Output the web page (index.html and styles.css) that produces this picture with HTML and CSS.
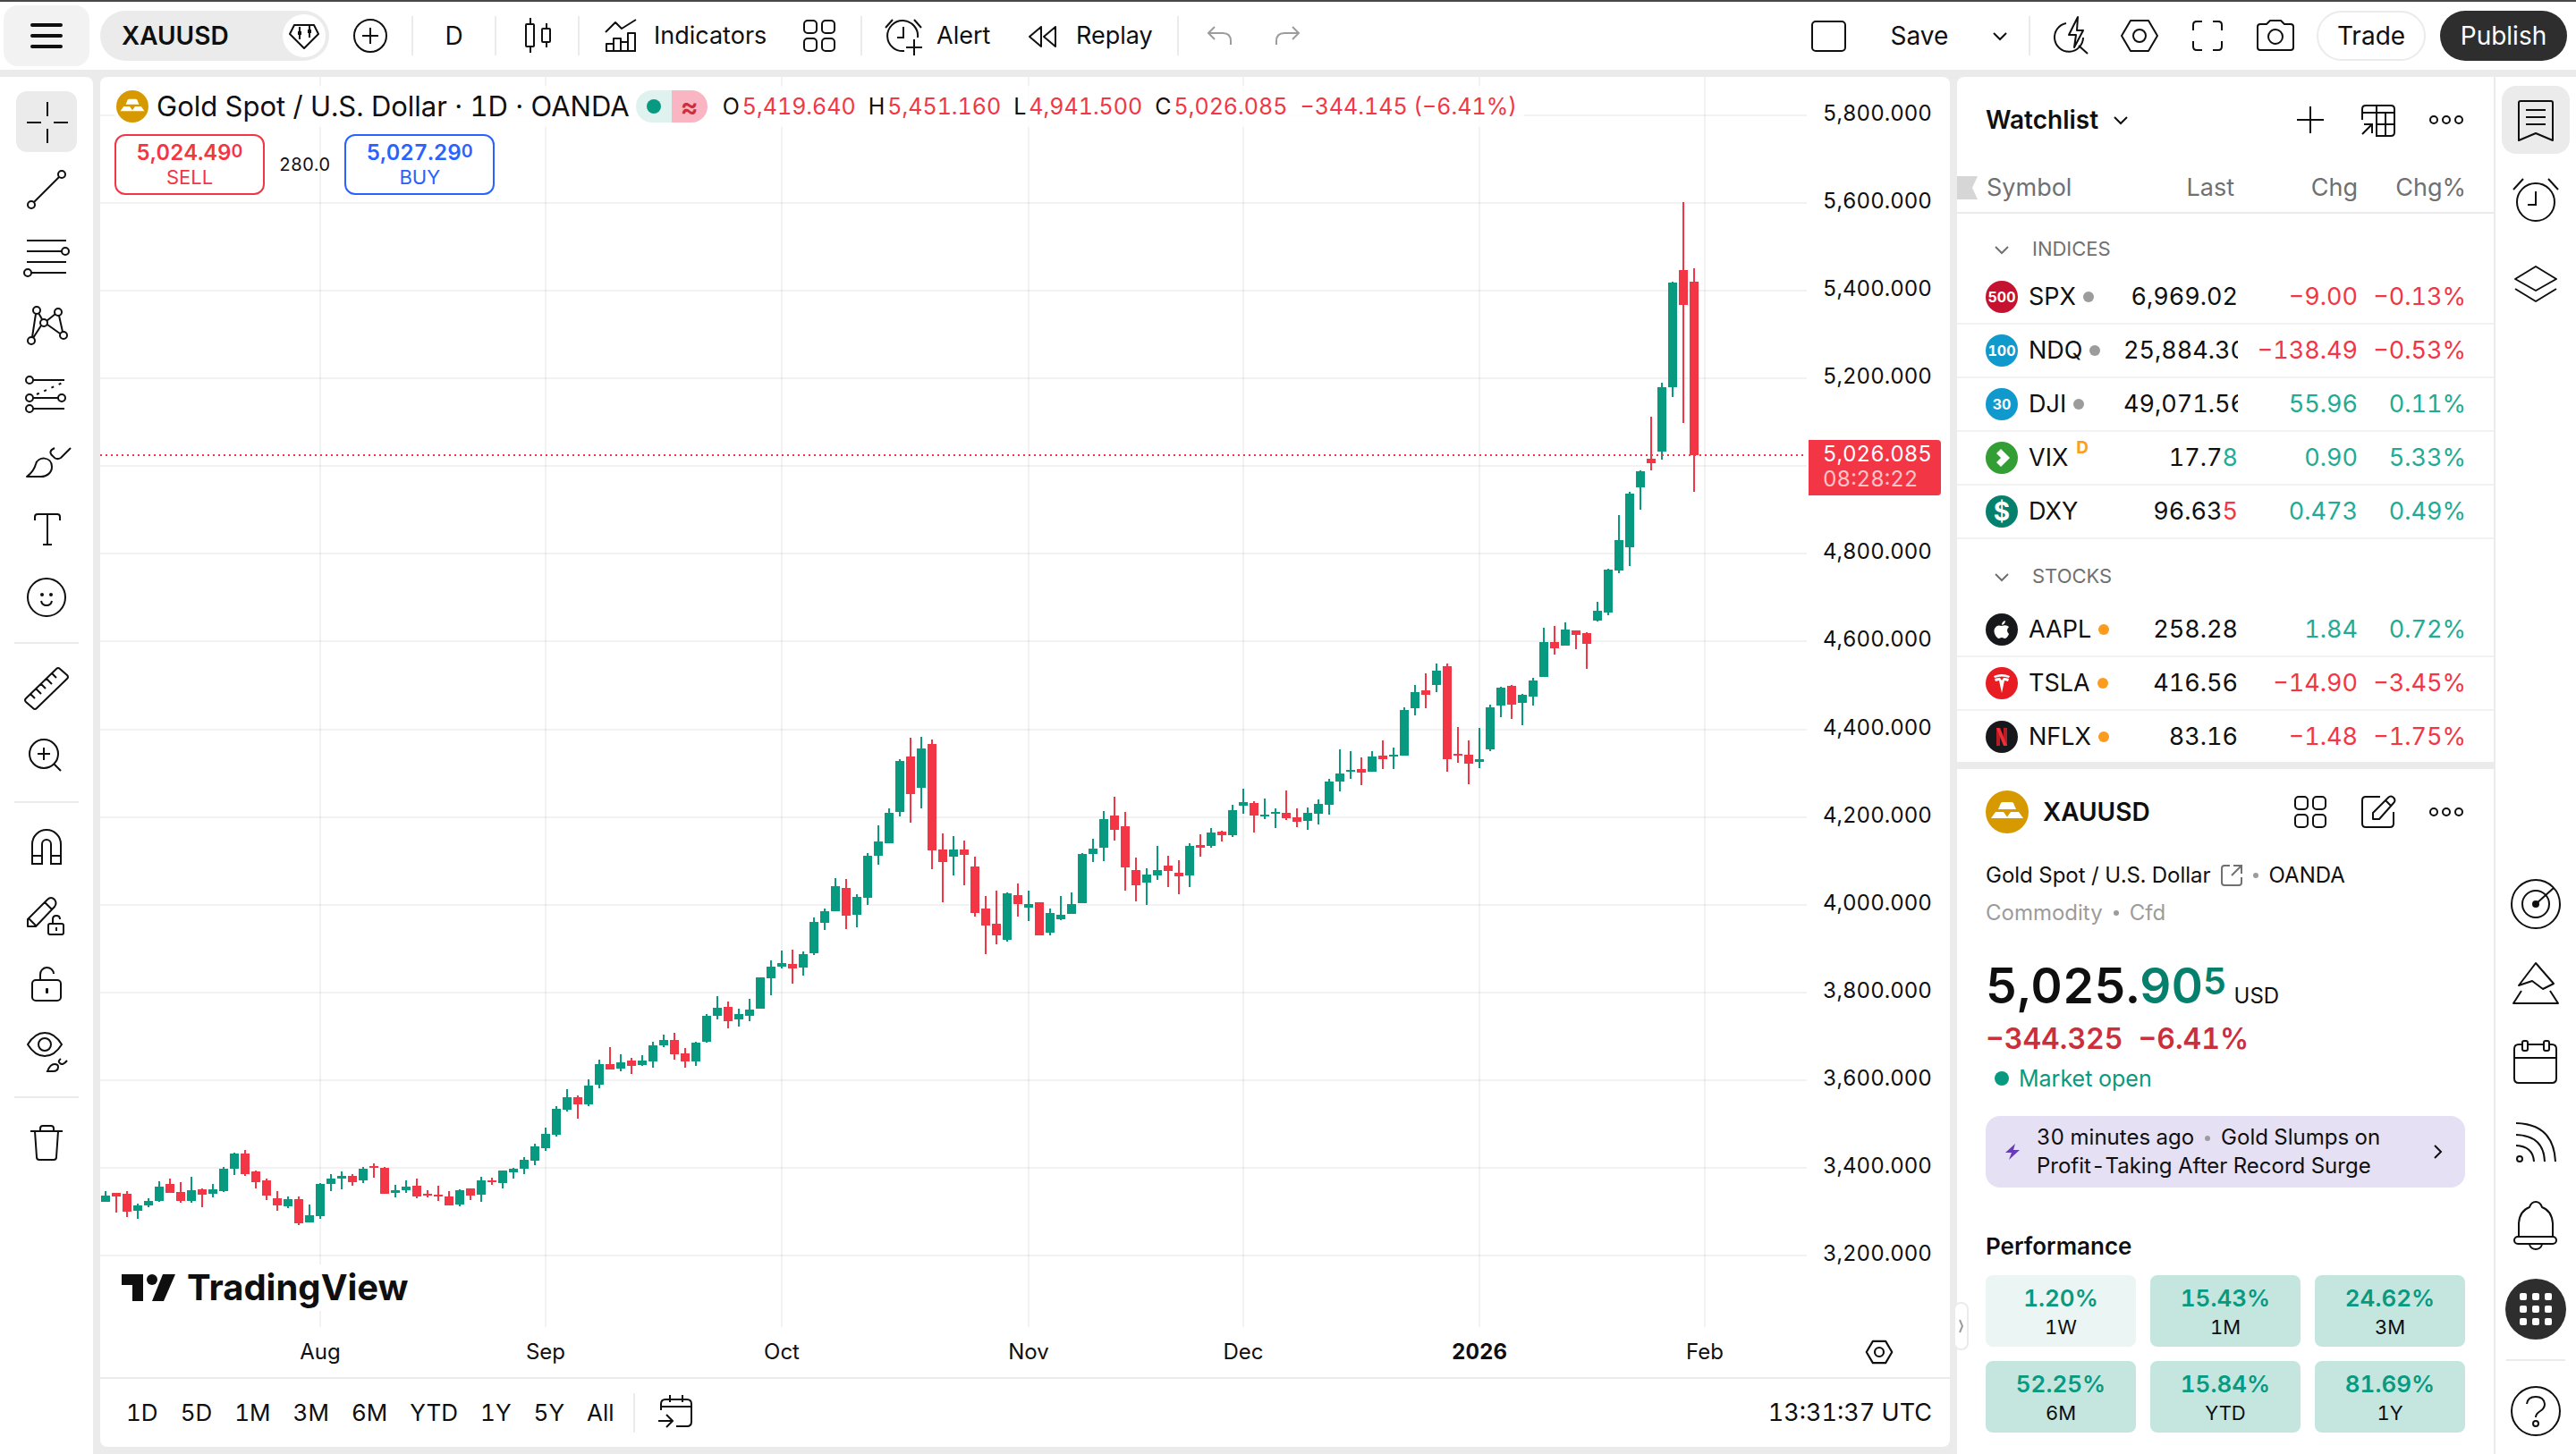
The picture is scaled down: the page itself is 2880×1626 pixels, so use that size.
FILE: index.html
```html
<!DOCTYPE html>
<html lang="en">
<head>
<meta charset="utf-8">
<meta name="viewport" content="width=device-width, initial-scale=1">
<title>XAUUSD 5,026.085 — TradingView</title>
<link rel="stylesheet" href="styles.css">
</head>
<body>
<svg class="defs" aria-hidden="true">
  <symbol id="i-gold" viewBox="0 0 48 48"><circle cx="24" cy="24" r="24" fill="#d69a00" stroke="none"/><path fill="#fff" stroke="none" d="M19 13h10q1 0 2 1l3 7H14l3-7q1-1 2-1zM11 24h9l5 7H6zM28 24h9l5 7H23z"/></symbol>
  <symbol id="i-grid" viewBox="0 0 56 56"><rect x="11" y="11" width="14" height="14" rx="4"/><rect x="31" y="11" width="14" height="14" rx="4"/><rect x="11" y="31" width="14" height="14" rx="4"/><rect x="31" y="31" width="14" height="14" rx="4"/></symbol>
  <symbol id="i-dots" viewBox="0 0 56 56"><circle cx="14" cy="28" r="4"/><circle cx="28" cy="28" r="4"/><circle cx="42" cy="28" r="4"/></symbol>
  <symbol id="i-chev" viewBox="0 0 20 20"><path d="M3 7l7 7 7-7"/></symbol>
  <symbol id="i-hex" viewBox="0 0 56 56"><path d="M18 11h20l10 17-10 17H18L8 28z" stroke-linejoin="round"/><circle cx="28" cy="28" r="7"/></symbol>
</svg>

<div class="app">
  <header class="topbar">
    <button class="menu" aria-label="Open menu"><svg class="ic" viewBox="0 0 56 56"><path d="M12 16h32M12 28h32M12 40h32" stroke-width="4" stroke-linecap="round"/></svg></button>
    <div class="symbol-pill">
      <button class="symbol-name">XAUUSD</button>
      <button class="gem" aria-label="Asset details"><svg class="ic" viewBox="0 0 56 56"><path d="M17 16h22l5 10-16 16-16-16z" stroke-linejoin="round"/><path d="M23 18v14M34 17v13M21 24h4M21 26h4M32 22h4M32 24h4"/></svg></button>
    </div>
    <button class="tool compare" aria-label="Compare"><svg class="ic" viewBox="0 0 56 56"><circle cx="28" cy="28" r="18"/><path d="M28 19v18M19 28h18"/></svg></button>
    <span class="sep"></span>
    <button class="interval">D</button>
    <span class="sep"></span>
    <button class="interval" aria-label="Candles"><svg class="ic" viewBox="0 0 56 56"><rect x="15" y="15" width="9" height="25" rx="1"/><path d="M20 8v7M20 40v7"/><rect x="33" y="20" width="9" height="15" rx="1"/><path d="M38 14v6M38 35v6"/></svg></button>
    <span class="sep"></span>
    <button class="tool labelled indicators"><svg class="ic" viewBox="0 0 56 56"><path d="M11 24l11-11 7 7L45 10M12 45V37h8v8M20 45V31h8v14M28 45V35h8v10M36 45V25h8v20M11 45h34" stroke-linejoin="round"/></svg>Indicators</button>
    <button class="tool" aria-label="Indicator templates"><svg class="ic"><use href="#i-grid"/></svg></button>
    <span class="sep wide"></span>
    <button class="tool labelled alert"><svg class="ic" viewBox="0 0 56 56"><path d="M8 19l8-9M48 19l-8-9M44 30A17 17 0 1 0 29 45M28 18v12h-7M40 32v18M31 41h18"/></svg>Alert</button>
    <button class="tool labelled replay"><svg class="ic" viewBox="0 0 56 56"><path d="M26 18v22L13 29zM42 18v22L29 29z" stroke-linejoin="round"/></svg>Replay</button>
    <span class="sep wide"></span>
    <button class="tool" aria-label="Undo" disabled><svg class="ic" viewBox="0 0 56 56"><path d="M22 18l-7 7 7 7M15 25h16q9 0 9 9v4"/></svg></button>
    <button class="tool redo" aria-label="Redo" disabled><svg class="ic" viewBox="0 0 56 56"><path d="M34 18l7 7-7 7M41 25H25q-9 0-9 9v4"/></svg></button>

    <div class="topbar-right">
      <button class="tool" aria-label="Layout"><svg class="ic" viewBox="0 0 56 56"><rect x="10" y="12" width="37" height="33" rx="4"/></svg></button>
      <button class="save">Save</button>
      <button class="caret" aria-label="Manage layouts"><svg class="ic-s"><use href="#i-chev"/></svg></button>
      <span class="sep"></span>
      <button class="tool" aria-label="Quick search"><svg class="ic" viewBox="0 0 56 56"><path d="M22 14A16 16 0 1 0 41 30M36 39l10 9M35 7L25 27h8l-2 14 10-19h-7z" stroke-linejoin="round"/></svg></button>
      <button class="tool" aria-label="Settings"><svg class="ic"><use href="#i-hex"/></svg></button>
      <button class="tool" aria-label="Fullscreen"><svg class="ic" viewBox="0 0 56 56"><path d="M12 22v-6q0-4 4-4h6M34 12h6q4 0 4 4v6M44 34v6q0 4-4 4h-6M22 44h-6q-4 0-4-4v-6"/></svg></button>
      <button class="tool" aria-label="Take a snapshot"><svg class="ic" viewBox="0 0 56 56"><path d="M11 15h7l4-4h12l4 4h7q3 0 3 3v23q0 3-3 3H11q-3 0-3-3V18q0-3 3-3z" stroke-linejoin="round"/><circle cx="28" cy="29" r="8"/></svg></button>
      <button class="trade">Trade</button>
      <button class="publish">Publish</button>
    </div>
  </header>

  <div class="workspace">
    <nav class="drawbar" aria-label="Drawing tools">
      <button class="draw on" aria-label="Cross"><svg class="ic" viewBox="0 0 56 56"><path d="M29 6v16M29 36v16M6 29h16M36 29h16"/></svg></button>
      <button class="draw" aria-label="Trend line"><svg class="ic" viewBox="0 0 56 56"><circle cx="11" cy="45" r="4"/><circle cx="45" cy="11" r="4"/><path d="M14 42l28-28"/></svg></button>
      <button class="draw" aria-label="Fib retracement"><svg class="ic" viewBox="0 0 56 56"><path d="M6 9h44M6 21h39M6 33h44M11 45h39"/><circle cx="49" cy="21" r="4"/><circle cx="7" cy="45" r="4"/></svg></button>
      <button class="draw" aria-label="Patterns"><svg class="ic" viewBox="0 0 56 56"><circle cx="17" cy="11" r="4"/><circle cx="41" cy="13" r="4"/><circle cx="25" cy="25" r="4"/><circle cx="47" cy="39" r="4"/><circle cx="11" cy="45" r="4"/><path d="M16 15l-4 26M19 14l4 7M28 23l10-8M42 17l4 18M29 27l14 10M22 28l-9 14"/></svg></button>
      <button class="draw" aria-label="Projection"><svg class="ic" viewBox="0 0 56 56"><circle cx="9" cy="13" r="4"/><circle cx="9" cy="33" r="4"/><circle cx="45" cy="33" r="4"/><circle cx="9" cy="45" r="4"/><path d="M13 13h35M13 33h28M13 45h35"/><path d="M17 29l29-13" stroke-dasharray="3 6"/></svg></button>
      <button class="draw" aria-label="Brush"><svg class="ic" viewBox="0 0 56 56"><path d="M6 45q8-6 10-14c2-9 18-9 18 3 0 7-6 11-12 11zM37 13q-8 4-2 9 4 5 9 2L55 13" stroke-linejoin="round"/></svg></button>
      <button class="draw" aria-label="Text"><svg class="ic" viewBox="0 0 56 56"><path d="M15 18v-4q0-3 3-3h22q3 0 3 3v4M29 11v34M24 45h10"/></svg></button>
      <button class="draw" aria-label="Icons"><svg class="ic" viewBox="0 0 56 56"><circle cx="28" cy="28" r="21"/><path d="M22 32q1 5 6 5t6-5"/><circle class="fill" cx="23" cy="25" r="2"/><circle class="fill" cx="33" cy="25" r="2"/></svg></button>
      <hr>
      <button class="draw" aria-label="Measure"><svg class="ic" viewBox="0 0 56 56"><path d="M39 6q2-2 4 0l8 7q2 2 0 4L17 50q-2 2-4 0l-8-7q-2-2 0-4zM34 11l5 5M28 17l6 6M22 23l5 5M16 28l6 6M10 34l5 5"/></svg></button>
      <button class="draw" aria-label="Zoom in"><svg class="ic" viewBox="0 0 56 56"><circle cx="25" cy="25" r="16"/><path d="M25 18v14M18 25h14M36 36l8 8"/></svg></button>
      <hr>
      <button class="draw" aria-label="Magnet mode"><svg class="ic" viewBox="0 0 56 56"><path d="M12 46V24a16 16 0 0 1 32 0v22H33V24a5 5 0 0 0-10 0v22zM12 37h11M33 37h11"/></svg></button>
      <button class="draw" aria-label="Stay in drawing mode"><svg class="ic" viewBox="0 0 56 56"><path d="M7 40v-8l22-22q4-4 8 0 3 4 0 8L16 40zM8 31l8 8M26 13l8 8" stroke-linejoin="round"/><rect x="30" y="37" width="17" height="12" rx="2"/><path d="M35 37v-5q0-4 4-4t4 4M39 41v4"/></svg></button>
      <button class="draw" aria-label="Lock all drawings"><svg class="ic" viewBox="0 0 56 56"><rect x="12" y="24" width="32" height="23" rx="4"/><path d="M21 24v-6a7 7 0 0 1 15-1"/><rect class="fill" x="27" y="33" width="3" height="6" rx="1"/></svg></button>
      <button class="draw" aria-label="Hide drawings"><svg class="ic" viewBox="0 0 56 56"><path d="M7 20Q15 7 26 7t19 13Q37 33 26 33T7 20z"/><circle cx="26" cy="20" r="7"/><path d="M29 50q3-8 8-8 4 0 4 3 0 5-6 5zM44 36q-4 3-1 5 3 3 8-3"/></svg></button>
      <hr>
      <button class="draw" aria-label="Remove objects"><svg class="ic" viewBox="0 0 56 56"><path d="M10 15h36M21 15v-3q0-3 3-3h9q3 0 3 3v3M15 15l2 29q0 3 3 3h16q3 0 3-3l2-29"/></svg></button>
    </nav>

    <main class="chart">
      <div class="chart-body">
        <div class="plot" id="plot">
          <svg class="canvas" id="canvas" role="img" aria-label="Gold Spot / U.S. Dollar daily candles"></svg>
          <div class="legend">
            <svg class="coin"><use href="#i-gold"/></svg>
            <h1>Gold Spot / U.S. Dollar · 1D · OANDA</h1>
            <span class="status"><span class="open"></span><span class="delay">≈</span></span>
            <div class="ohlc"><span>O<b>5,419.640</b></span><span>H<b>5,451.160</b></span><span>L<b>4,941.500</b></span><span>C<b>5,026.085</b></span><b>−344.145 (−6.41%)</b></div>
          </div>
          <div class="quotes">
            <button class="quote sell"><strong>5,024.49<i>0</i></strong>SELL</button>
            <span class="spread">280.0</span>
            <button class="quote buy"><strong>5,027.29<i>0</i></strong>BUY</button>
          </div>
          <a class="brand" href="#"><svg viewBox="0 0 60 30"><path d="M0 0h24v30H12V12H0zM46 0h14L47 30H34z"/><circle cx="34" cy="6" r="6"/></svg>TradingView</a>
        </div>
        <div class="price-axis" id="prices"><div class="tag" id="tag">5,026.085<span>08:28:22</span></div></div>
        <div class="time-axis" id="times"></div>
        <button class="axis-settings" aria-label="Axis settings"><svg class="ic-m"><use href="#i-hex"/></svg></button>
      </div>
      <footer class="ranges">
        <button>1D</button><button>5D</button><button>1M</button><button>3M</button><button>6M</button><button>YTD</button><button>1Y</button><button>5Y</button><button>All</button>
        <span class="sep"></span>
        <button class="goto" aria-label="Go to date"><svg class="ic" viewBox="0 0 56 56"><path d="M11 25v-7q0-5 5-5h24q5 0 5 5v20q0 5-5 5H28M11 21h34M21 8v8M35 8v8M8 37h15M17 30l7 7-7 7"/></svg></button>
        <button class="clock">13:31:37 UTC</button>
      </footer>
    </main>

    <aside class="side">
      <section class="watchlist">
        <div class="side-head">
          <button class="list-name">Watchlist <svg class="ic-s"><use href="#i-chev"/></svg></button>
          <div class="actions">
            <button aria-label="Add symbol"><svg class="ic" viewBox="0 0 56 56"><path d="M28 13v30M13 28h30"/></svg></button>
            <button aria-label="Advanced view"><svg class="ic" viewBox="0 0 56 56"><path d="M10 28V16q0-4 4-4h28q4 0 4 4v26q0 4-4 4H26V12M10 20h36M26 33h20M36 20v26M10 44l11-11M12 33h9v10"/></svg></button>
            <button aria-label="More"><svg class="ic"><use href="#i-dots"/></svg></button>
          </div>
        </div>
        <table>
          <colgroup><col class="c-name"><col class="c-last"><col class="c-chg"><col class="c-pct"></colgroup>
          <thead><tr><th><svg class="flag" viewBox="0 0 23 26"><path d="M0 0h23l-6 13 6 13H0z"/></svg>Symbol</th><th class="h-last">Last</th><th>Chg</th><th>Chg%</th></tr></thead>
          <tbody>
            <tr class="group"><th colspan="4"><svg class="ic-s"><use href="#i-chev"/></svg>INDICES</th></tr>
            <tr><td><span class="sym"><span class="logo spx">500</span>SPX<i class="dot"></i></span></td><td><div>6,969.02</div></td><td class="dn">−9.00</td><td class="dn">−0.13%</td></tr>
            <tr><td><span class="sym"><span class="logo ndq">100</span>NDQ<i class="dot"></i></span></td><td><div>25,884.30</div></td><td class="dn">−138.49</td><td class="dn">−0.53%</td></tr>
            <tr><td><span class="sym"><span class="logo ndq">30</span>DJI<i class="dot"></i></span></td><td><div>49,071.56</div></td><td class="up">55.96</td><td class="up">0.11%</td></tr>
            <tr><td><span class="sym"><span class="logo vix"><svg viewBox="0 0 36 36"><path d="M17 8l5 5-5 5-5-5zM22 13l5 5-5 5-5-5zM17 18l5 5-5 5-5-5z"/></svg></span>VIX<sup>D</sup></span></td><td><div>17.7<span class="up">8</span></div></td><td class="up">0.90</td><td class="up">5.33%</td></tr>
            <tr><td><span class="sym"><span class="logo dxy">$</span>DXY</span></td><td><div>96.63<span class="dn">5</span></div></td><td class="up">0.473</td><td class="up">0.49%</td></tr>
            <tr class="group later"><th colspan="4"><svg class="ic-s"><use href="#i-chev"/></svg>STOCKS</th></tr>
            <tr><td><span class="sym"><span class="logo dark"><svg viewBox="0 0 36 36"><path d="M22 8q0 4-4 5 0-4 4-5zM18 14q5-2 8 1-4 4 0 8-2 5-5 5-2-1-3-1t-3 1c-3 0-7-7-5-11 2-4 5-4 8-3z"/></svg></span>AAPL<i class="dot live"></i></span></td><td><div>258.28</div></td><td class="up">1.84</td><td class="up">0.72%</td></tr>
            <tr><td><span class="sym"><span class="logo tsla"><svg viewBox="0 0 36 36"><path d="M9 10q9-4 18 0l-1 2q-8-3-16 0zM10 13q3-1 6-1l2 3 2-3q3 0 6 1l-1 3-4-1-3 14-3-14-4 1z"/></svg></span>TSLA<i class="dot live"></i></span></td><td><div>416.56</div></td><td class="dn">−14.90</td><td class="dn">−3.45%</td></tr>
            <tr><td><span class="sym"><span class="logo dark"><svg viewBox="0 0 36 36"><path fill="#b81d24" d="M12 8h4v20h-4zM20 8h4v20h-4z"/><path fill="#f22c38" d="M12 8h4l8 20h-4z"/></svg></span>NFLX<i class="dot live"></i></span></td><td><div>83.16</div></td><td class="dn">−1.48</td><td class="dn">−1.75%</td></tr>
          </tbody>
        </table>
      </section>

      <section class="details">
        <div class="side-head">
          <svg class="coin-l"><use href="#i-gold"/></svg>
          <h2>XAUUSD</h2>
          <div class="actions">
            <button aria-label="Widgets"><svg class="ic"><use href="#i-grid"/></svg></button>
            <button aria-label="Notes"><svg class="ic" viewBox="0 0 56 56"><path d="M30 11H14q-4 0-4 4v26q0 4 4 4h27q4 0 4-4V28M22 36v-7l17-17q3-3 6 0 3 3 0 6L29 36zM36 15l6 6" stroke-linejoin="round"/></svg></button>
            <button aria-label="More"><svg class="ic"><use href="#i-dots"/></svg></button>
          </div>
        </div>
        <p class="name"><a href="#">Gold Spot / U.S. Dollar <svg viewBox="0 0 24 24"><path d="M10 1H4Q1 1 1 4v16q0 3 3 3h16q3 0 3-3v-6M14 1h9v9M23 1L12 12"/></svg></a><i></i>OANDA</p>
        <p class="kind">Commodity<i></i>Cfd</p>
        <p class="last">5,025.<em>90<sup>5</sup></em><small>USD</small></p>
        <p class="move"><span>−344.325</span><span>−6.41%</span></p>
        <p class="market">Market open</p>
        <a class="news" href="#">
          <svg class="bolt" viewBox="0 0 16 18"><path d="M11 0L0 10h7l-3 8L16 7H9z"/></svg>
          <span>30 minutes ago<i></i>Gold Slumps on Profit-Taking After Record Surge</span>
          <svg class="go" viewBox="0 0 12 16"><path d="M2 1l7 7-7 7"/></svg>
        </a>
        <h3>Performance</h3>
        <div class="tiles">
          <div class="tile light"><b>1.20%</b>1W</div><div class="tile"><b>15.43%</b>1M</div><div class="tile"><b>24.62%</b>3M</div>
          <div class="tile"><b>52.25%</b>6M</div><div class="tile"><b>15.84%</b>YTD</div><div class="tile"><b>81.69%</b>1Y</div>
        </div>
      </section>
      <button class="handle" aria-label="Collapse panel"><svg viewBox="0 0 6 16"><path d="M1 1l3 7-3 7"/></svg></button>
    </aside>

    <nav class="rail" aria-label="Panels">
      <button class="on" aria-label="Watchlist"><svg viewBox="0 0 76 76"><path d="M19 61V19q0-2 2-2h34q2 0 2 2v42l-19-8zM27 27h22M27 35h22M27 43h22" stroke-linejoin="round"/></svg></button>
      <button aria-label="Alerts"><svg viewBox="0 0 76 76"><circle cx="38" cy="39" r="21"/><path d="M38 27v15h-9M13 25l11-12M63 25L52 13"/></svg></button>
      <button aria-label="Object tree"><svg viewBox="0 0 76 76"><path d="M38 20l23 14-23 13-23-13zM15 45l23 14 23-14" stroke-linejoin="round"/></svg></button>
      <span class="grow"></span>
      <button aria-label="Screeners"><svg viewBox="0 0 76 76"><circle cx="38" cy="40" r="27"/><circle cx="38" cy="40" r="15"/><circle class="fill" cx="38" cy="40" r="4"/><path d="M38 40l20-18"/></svg></button>
      <button aria-label="Pine editor"><svg viewBox="0 0 76 76"><path d="M38 15l20 23-12 6-12-9-15 5zM22 46l-9 14h50l-9-14" stroke-linejoin="round"/></svg></button>
      <button aria-label="Calendar"><svg viewBox="0 0 76 76"><path d="M23 15h-4q-5 0-5 5v33q0 5 5 5h37q5 0 5-5V20q0-5-5-5h-3M29 15h18M14 30h47"/><rect x="23" y="11" width="6" height="11" rx="2"/><rect x="47" y="11" width="6" height="11" rx="2"/></svg></button>
      <button aria-label="News flow"><svg viewBox="0 0 76 76"><circle cx="20" cy="52" r="3"/><path d="M16 37q19 1 20 18M16 25q31 1 32 30M16 12q42 1 44 43"/></svg></button>
      <button aria-label="Notifications"><svg viewBox="0 0 76 76"><path d="M19 48V33q1-14 12-18 2-6 7-6t7 6q11 4 12 18v15"/><rect x="14" y="48" width="47" height="8" rx="4"/><path d="M31 57q2 5 7 5t7-5"/></svg></button>
      <button aria-label="More products"><svg viewBox="0 0 76 76"><circle cx="38" cy="38" r="34" fill="#2e2e2e" stroke="none"/><g fill="#fff" stroke="none"><rect x="20" y="20" width="8" height="8" rx="2"/><rect x="34" y="20" width="8" height="8" rx="2"/><rect x="48" y="20" width="8" height="8" rx="2"/><rect x="20" y="34" width="8" height="8" rx="2"/><rect x="34" y="34" width="8" height="8" rx="2"/><rect x="48" y="34" width="8" height="8" rx="2"/><rect x="20" y="48" width="8" height="8" rx="2"/><rect x="34" y="48" width="8" height="8" rx="2"/><rect x="48" y="48" width="8" height="8" rx="2"/></g></svg></button>
      <hr>
      <button aria-label="Help"><svg viewBox="0 0 76 76"><circle cx="38" cy="38" r="27"/><path d="M28 30q1-8 10-8t10 8q0 5-5 8t-5 7"/><circle cx="38" cy="52" r="3"/></svg></button>
    </nav>
  </div>
</div>
<script src="chart.js"></script>
</body>
</html>
```
FILE: styles.css
```css
:root {
  --ink: #0f0f0f;
  --muted: #707070;
  --faint: #9c9c9c;
  --line: #ebebeb;
  --hair: #f2f2f2;
  --red: #f23645;
  --green: #089981;
}

* { box-sizing: border-box; }

body {
  margin: 0;
  color: var(--ink);
  background: var(--line);
  font: 400 26px/32px Inter, "Liberation Sans", sans-serif;
  font-variant-numeric: tabular-nums;
}

button {
  padding: 0;
  border: 0;
  background: none;
  color: inherit;
  font: inherit;
  cursor: pointer;
}

a { color: inherit; text-decoration: none; }
h1, h2, h3, p { margin: 0; font-weight: 400; }
i, em { font-style: normal; }

svg { display: block; flex: none; fill: none; stroke: currentColor; stroke-width: 2; }
.fill { fill: currentColor; stroke: none; }
.defs { position: absolute; width: 0; height: 0; }
.ic { width: 56px; height: 56px; }
.ic-m { width: 40px; height: 40px; }
.ic-s { width: 20px; height: 20px; }

.app { display: flex; flex-direction: column; min-height: 100vh; }

/* top toolbar */
.topbar {
  display: flex;
  align-items: center;
  height: 78px;
  padding: 0 10px 0 4px;
  border-top: 2px solid #4a4747;
  background: #fff;
}
.topbar button { flex: none; font-size: 28px; }
.menu { display: flex; justify-content: center; align-items: center; width: 96px; height: 68px; border-radius: 16px; background: var(--hair); }
.symbol-pill { display: flex; flex: none; justify-content: space-between; align-items: center; width: 256px; height: 56px; margin-left: 12px; padding: 0 4px 0 24px; border-radius: 28px; background: var(--line); }
.topbar .symbol-name { font-weight: 600; }
.gem { display: flex; justify-content: center; align-items: center; width: 48px; height: 48px; border-radius: 24px; background: #fff; }
.compare { margin: 0 18px; }
.sep { flex: none; width: 2px; height: 44px; background: var(--line); }
.sep.wide { margin: 0 18px; }
.interval { display: flex; justify-content: center; width: 91px; }
.topbar .labelled { display: flex; align-items: center; gap: 9px; font-size: 27px; }
.indicators { width: 222px; margin-left: 18px; }
.alert { width: 156px; }
.replay { width: 160px; }
.redo { margin-left: 19px; }
.tool:disabled { color: var(--faint); }
.topbar-right { display: flex; align-items: center; gap: 20px; margin-left: auto; }
.topbar-right .save { width: 92px; margin-left: 8px; }
.topbar-right .caret { display: flex; justify-content: center; width: 32px; margin: 0 -2px 0 8px; }
.topbar-right .sep { margin: 0 -2px; }
.trade, .publish { height: 56px; border-radius: 28px; }
.topbar-right .trade { width: 122px; margin-left: -2px; border: 2px solid var(--line); }
.topbar-right .publish { width: 142px; margin-left: -4px; background: #2e2e2e; color: #fff; }

/* main area */
.workspace { display: flex; flex: 1; gap: 8px; padding-top: 8px; }
.drawbar { display: flex; flex: none; flex-direction: column; align-items: center; gap: 8px; width: 104px; padding-top: 16px; border-radius: 0 8px 0 0; background: #fff; }
.draw { display: flex; justify-content: center; align-items: center; width: 68px; height: 68px; border-radius: 12px; }
.draw.on, .rail .on { background: var(--line); }
.drawbar hr { width: 72px; height: 2px; margin: 8px 0; border: 0; background: var(--line); }

/* chart */
.chart { display: flex; flex: 1; flex-direction: column; min-width: 0; margin-bottom: 8px; border-radius: 8px; background: #fff; overflow: hidden; }
.chart-body { display: grid; flex: 1; grid-template: 1fr 56px / 1fr 160px; }
.plot, .price-axis, .time-axis { position: relative; }
.plot { overflow: hidden; }
.canvas { position: absolute; inset: 0; width: 100%; height: 100%; stroke: none; }
.canvas .grid { fill: rgba(15, 15, 15, .055); }
.canvas .up { fill: var(--green); }
.canvas .dn { fill: var(--red); }
.canvas .now { stroke: var(--red); stroke-dasharray: 2 4; }

.legend, .quotes, .brand { position: absolute; left: 16px; display: flex; align-items: center; }
.legend { top: 10px; height: 46px; padding: 0 8px 0 2px; background: rgba(255, 255, 255, .8); }
.coin { width: 36px; height: 36px; }
.legend h1 { margin: 0 7px 0 9px; font-size: 31px; white-space: nowrap; }
.status { display: flex; width: 80px; height: 36px; border-radius: 18px; overflow: hidden; }
.status span { display: flex; flex: 1; justify-content: center; align-items: center; }
.status .open { background: #e0f2ef; }
.open::before { width: 16px; height: 16px; border-radius: 8px; background: var(--green); content: ""; }
.status .delay { background: #f9b5c2; color: #cc2f3c; font-weight: 600; font-size: 30px; }
.ohlc { display: flex; gap: 14px; margin-left: 17px; font-size: 25px; white-space: nowrap; }
.ohlc b { color: var(--red); font-weight: 400; }
.ohlc span b { margin-left: 3px; }

.quotes { top: 64px; gap: 16px; }
.quote { display: flex; flex-direction: column; align-items: center; justify-content: center; width: 168px; height: 68px; padding-top: 2px; border: 2px solid; border-radius: 12px; background: #fff; font-size: 22px; line-height: 28px; }
.quote strong { font-weight: 600; font-size: 24px; line-height: 26px; }
.quote i { font-size: 20px; vertical-align: 3px; line-height: 20px; }
.sell { color: var(--red); }
.buy { color: #2962ff; }
.spread { font-size: 20px; }

.brand { bottom: 18px; gap: 13px; padding: 0 8px; background: #fff; font-weight: 700; font-size: 40px; line-height: 52px; }
.brand svg { width: 60px; height: 30px; fill: var(--ink); stroke: none; }

.price-axis, .time-axis { font-size: 24px; }
.price-axis > span { position: absolute; left: 18px; margin-top: -18px; }
.time-axis > span { position: absolute; top: 12px; width: 120px; margin-left: -60px; text-align: center; }
.time-axis .year { font-weight: 700; }
.tag { position: absolute; left: 2px; width: 148px; height: 62px; margin-top: -17px; padding: 2px 0 0 16px; border-radius: 0 4px 4px 0; background: var(--red); color: #fff; line-height: 28px; z-index: 1; }
.tag span { display: block; opacity: .7; }
.axis-settings { display: flex; justify-content: center; align-items: center; width: 162px; }
.axis-settings .ic-m { stroke-width: 3; }

.ranges { display: flex; align-items: center; height: 78px; padding: 0 20px 0 29px; border-top: 2px solid var(--line); }
.ranges > button { flex: none; margin-right: 25px; }
.ranges .sep { margin-right: 18px; margin-left: -4px; }
.ranges .clock { margin: 0 0 0 auto; font-size: 27px; }

/* side panel */
.side { position: relative; display: flex; flex: none; flex-direction: column; gap: 8px; width: 600px; }
.watchlist, .details { background: #fff; }
.watchlist { border-radius: 8px 0 0 0; }
.side-head { display: flex; align-items: center; height: 96px; padding: 0 25px 0 32px; font-size: 28px; }
.side .list-name { display: flex; align-items: center; gap: 15px; font-weight: 600; }
.actions { display: flex; gap: 20px; margin-left: auto; }

table { width: 100%; border-collapse: collapse; table-layout: fixed; }
.c-name { width: 186px; }
.c-last { width: 128px; }
.c-chg { width: 134px; }
th, td { height: 60px; padding: 0; font-weight: 400; text-align: right; }
td { border-bottom: 2px solid var(--hair); font-size: 27px; }
tbody tr:last-child td { height: 58px; border-bottom: 0; }
th:last-child, td:last-child { padding-right: 31px; }
td > div { overflow: hidden; white-space: nowrap; }
thead th { height: 56px; border-bottom: 2px solid var(--line); color: var(--muted); font-size: 27px; }
thead th:first-child { text-align: left; }
thead .h-last { padding-right: 4px; }
.flag { display: inline-block; width: 23px; height: 26px; margin-right: 10px; fill: #d6d6d6; stroke: none; vertical-align: -4px; }
.group th { height: 64px; padding: 14px 0 0 40px; color: var(--muted); font-size: 22px; text-align: left; }
.group.later th { height: 72px; padding-top: 10px; }
.group .ic-s { display: inline-block; margin-right: 24px; vertical-align: -3px; }
.sym { display: flex; align-items: center; padding-left: 32px; }
.sym sup { align-self: flex-start; margin-left: 9px; color: #ff9d1e; font-weight: 700; font-size: 19px; line-height: 14px; }
.dot { width: 12px; height: 12px; margin-left: 8px; border-radius: 6px; background: var(--faint); }
.dot.live { background: #fb9c1f; }
.logo { display: flex; justify-content: center; align-items: center; width: 36px; height: 36px; margin-right: 12px; border-radius: 18px; color: #fff; font-weight: 700; font-size: 16px; }
.logo svg { width: 36px; height: 36px; fill: #fff; stroke: none; }
.spx { background: #c41230; }
.ndq { background: #0f99cc; }
.vix { background: #339e33; }
.dxy { background: #05806c; font-size: 28px; }
.dark { background: #17181b; }
.tsla { background: #e81c23; }
.up { color: #22ab94; }
.dn { color: var(--red); }

.details { flex: 1; padding: 0 32px 16px; font-size: 24px; }
.details .side-head { margin: 0 -32px; }
.coin-l { width: 48px; height: 48px; }
.details h2 { margin-left: 16px; font-weight: 600; font-size: 28px; }
.name, .kind { display: flex; align-items: center; height: 42px; }
.name { margin-top: 2px; }
.name a { display: flex; align-items: center; gap: 11px; }
.name svg { width: 24px; height: 24px; color: var(--muted); }
.name > i, .kind i, .news i { display: inline-block; width: 6px; height: 6px; margin: 0 12px; border-radius: 3px; background: var(--faint); }
.news i { vertical-align: middle; }
.kind { color: var(--faint); }
.last { display: flex; align-items: baseline; height: 60px; margin-top: 30px; font-weight: 600; font-size: 55px; line-height: 60px; }
.last em { color: #05806c; }
.last sup { font-size: 41px; line-height: 0; vertical-align: 10px; }
.last small { margin-left: 8px; font-weight: 400; font-size: 24px; }
.move { display: flex; gap: 17px; height: 52px; margin-top: 4px; align-items: center; color: #cc2f3c; font-weight: 600; font-size: 32px; }
.market { display: flex; align-items: center; gap: 11px; height: 36px; padding-left: 10px; color: var(--green); font-size: 25px; }
.market::before { width: 16px; height: 16px; border-radius: 8px; background: var(--green); content: ""; }
.news { display: flex; align-items: center; margin-top: 24px; height: 80px; padding: 0 24px 0 22px; border-radius: 16px; background: #e5e0f3; }
.bolt { width: 16px; height: 18px; margin-right: 19px; fill: #673ab7; stroke: none; }
.news span { flex: 1; }
.go { width: 12px; height: 16px; }
.details h3 { margin: 50px 0 16px; font-weight: 600; font-size: 26px; }
.tiles { display: grid; grid-template-columns: repeat(3, 1fr); gap: 16px; }
.tile { display: flex; flex-direction: column; justify-content: center; align-items: center; height: 80px; padding-top: 4px; border-radius: 8px; background: #c4e6df; font-size: 22px; }
.tile b { color: var(--green); font-weight: 600; font-size: 26px; }
.tile.light { background: #ebf5f3; }
.handle { position: absolute; bottom: 116px; left: -4px; display: flex; justify-content: center; align-items: center; width: 17px; height: 54px; border: 2px solid var(--line); border-radius: 8px; background: #fff; color: var(--faint); }
.handle svg { width: 6px; height: 16px; }

/* right rail */
.rail { display: flex; flex: none; flex-direction: column; align-items: center; gap: 15px; width: 92px; margin-left: -8px; padding: 10px 0; border-left: 2px solid var(--line); background: #fff; }
.rail button { flex: none; width: 76px; height: 76px; border-radius: 16px; }
.rail svg { width: 76px; height: 76px; }
.grow { flex: 1; }
.rail hr { width: 66px; height: 2px; margin: 3px 0; border: 0; background: var(--line); }
```
FILE: chart.js
```js
// Each bar: direction (1 up, 0 down), high, body top, body bottom, low.
// Heights are in scale units; see unitOf() for the relation to price.
const bars = [
[1,1332,1337,1344,1344],[0,1334,1334,1338,1356],[0,1332,1335,1355,1361],[1,1346,1348,1354,1363],[1,1340,1343,1348,1350],
[1,1321,1327,1343,1344],[0,1318,1324,1334,1334],[0,1322,1333,1343,1345],[1,1316,1331,1343,1345],[0,1329,1330,1336,1350],
[1,1324,1330,1335,1339],[1,1305,1307,1332,1333],[1,1289,1290,1307,1314],[0,1286,1290,1313,1315],[0,1309,1310,1322,1329],
[0,1318,1320,1337,1342],[0,1332,1340,1348,1354],[1,1338,1341,1349,1351],[0,1338,1341,1368,1370],[1,1347,1359,1367,1367],
[1,1323,1324,1360,1363],[1,1313,1318,1324,1332],[1,1310,1315,1318,1330],[0,1313,1315,1322,1326],[1,1305,1307,1320,1323],
[0,1301,1304,1306,1317],[0,1305,1306,1335,1335],[1,1325,1331,1334,1339],[1,1320,1327,1331,1334],[0,1318,1326,1338,1340],
[0,1331,1335,1337,1339],[0,1326,1336,1338,1343],[0,1332,1338,1348,1348],[1,1330,1331,1347,1349],[0,1329,1329,1337,1342],
[1,1316,1320,1336,1344],[0,1317,1320,1322,1325],[1,1309,1309,1323,1329],[1,1306,1307,1311,1318],[1,1294,1297,1307,1313],
[1,1279,1282,1298,1303],[1,1261,1268,1284,1287],[1,1237,1240,1269,1271],[1,1218,1227,1241,1243],[0,1225,1227,1235,1251],
[1,1207,1214,1235,1237],[1,1185,1190,1213,1217],[0,1171,1190,1196,1196],[1,1179,1188,1195,1198],[0,1183,1186,1192,1201],
[1,1180,1186,1191,1192],[1,1165,1169,1187,1194],[1,1157,1163,1169,1171],[0,1155,1163,1179,1185],[0,1172,1178,1187,1194],
[1,1165,1166,1187,1192],[1,1134,1136,1165,1166],[1,1114,1127,1136,1140],[0,1120,1126,1142,1150],[1,1128,1134,1140,1148],
[1,1117,1129,1136,1142],[1,1093,1093,1128,1128],[1,1074,1081,1094,1113],[1,1063,1077,1081,1083],[0,1062,1078,1083,1100],
[1,1064,1067,1082,1091],[1,1026,1031,1066,1068],[1,1016,1019,1032,1040],[1,982,991,1019,1019],[0,983,993,1024,1039],
[1,1000,1003,1023,1037],[1,954,957,1004,1012],[1,923,941,957,967],[1,904,909,943,943],[1,849,851,908,913],
[0,825,846,888,920],[1,824,837,881,904],[0,827,832,951,972],[0,932,950,964,1009],[1,935,950,958,979],
[0,940,950,956,990],[0,958,969,1021,1025],[0,1002,1016,1035,1067],[0,996,1033,1046,1056],[1,998,999,1051,1053],
[0,988,1001,1011,1025],[1,996,1011,1015,1030],[0,1009,1009,1046,1046],[1,1016,1021,1043,1046],[1,1002,1023,1028,1029],
[1,998,1011,1022,1022],[1,954,955,1010,1010],[1,938,949,955,964],[1,907,916,948,963],[0,891,912,928,940],
[0,908,924,970,996],[0,959,973,990,1008],[1,971,978,987,1012],[1,946,973,979,984],[0,957,968,974,992],
[0,962,976,980,1000],[1,943,946,979,992],[0,933,945,948,958],[1,926,931,946,948],[0,929,930,934,941],
[1,900,906,934,936],[1,882,897,901,910],[0,896,898,912,931],[1,893,911,913,916],[1,904,908,910,926],
[0,884,909,915,917],[0,904,914,919,925],[1,903,909,918,928],[1,894,899,910,922],[1,871,874,900,911],
[1,838,865,874,885],[1,840,861,863,871],[0,847,860,864,878],[1,840,846,863,863],[0,828,845,849,860],
[1,836,844,846,860],[1,791,794,845,845],[1,766,774,792,800],[0,753,772,777,792],[1,742,750,766,774],
[0,742,745,849,863],[0,813,843,845,853],[0,828,844,854,877],[1,814,849,852,859],[1,788,791,838,840],
[1,768,769,789,802],[0,766,767,788,804],[1,776,777,786,811],[1,758,761,779,789],[1,702,718,757,757],
[0,700,718,725,732],[1,696,704,722,722],[0,705,705,710,726],[0,707,708,720,748],[1,673,683,694,695],
[1,636,637,685,688],[1,576,604,638,641],[1,550,552,612,633],[1,526,527,545,570],[0,466,513,518,526],
[1,428,433,505,514],[1,315,316,433,444],[0,226,302,341,473],[0,300,315,509,550]];
const months = [[20,"Aug"],[41,"Sep"],[63,"Oct"],[86,"Nov"],[106,"Dec"],[128,"2026"],[149,"Feb"]];
const step = 12, rightGap = 126, unitTop = 86, unitSpan = 1398, lastPrice = 5026.085;

const canvas = document.getElementById("canvas");
const prices = document.getElementById("prices");
const times = document.getElementById("times");
const tag = document.getElementById("tag");

const unitOf = price => 129 + (5800 - price) * 1275 / 2600;

function rect(cls, x, y, w, h) {
  return `<rect class="${cls}" x="${x}" y="${y}" width="${w}" height="${h}"/>`;
}

function label(parent, text, side, value, cls) {
  const el = document.createElement("span");
  el.textContent = text;
  el.style[side] = value + "px";
  if (cls) el.className = cls;
  parent.append(el);
}

function draw() {
  const w = canvas.clientWidth, h = canvas.clientHeight;
  const toY = unit => Math.round((unit - unitTop) * h / unitSpan);
  const toX = index => w - rightGap - (bars.length - 1 - index) * step;
  let out = "";
  document.querySelectorAll(".price-axis > span, .time-axis > span").forEach(el => el.remove());

  for (let p = 5800; p >= 3200; p -= 200) {
    const y = toY(unitOf(p));
    out += rect("grid", 0, y - 1, w, 2);
    if (Math.abs(p - lastPrice) > 60) label(prices, p.toLocaleString("en-US") + ".000", "top", y);
  }
  for (const [index, text] of months) {
    const x = toX(index);
    out += rect("grid", x - 1, 0, 2, h);
    label(times, text, "left", x, text === "2026" ? "year" : "");
  }
  bars.forEach(([up, high, top, bottom, low], index) => {
    const x = toX(index), cls = up ? "up" : "dn";
    out += rect(cls, x - 1, toY(high), 2, toY(low) - toY(high));
    out += rect(cls, x - 5, toY(top), 10, Math.max(2, toY(bottom) - toY(top)));
  });
  const now = toY(unitOf(lastPrice));
  out += `<path class="now" stroke-width="2" d="M0 ${now}H${w}"/>`;
  tag.style.top = now + "px";
  canvas.innerHTML = out;
}

draw();
addEventListener("resize", draw);
```
